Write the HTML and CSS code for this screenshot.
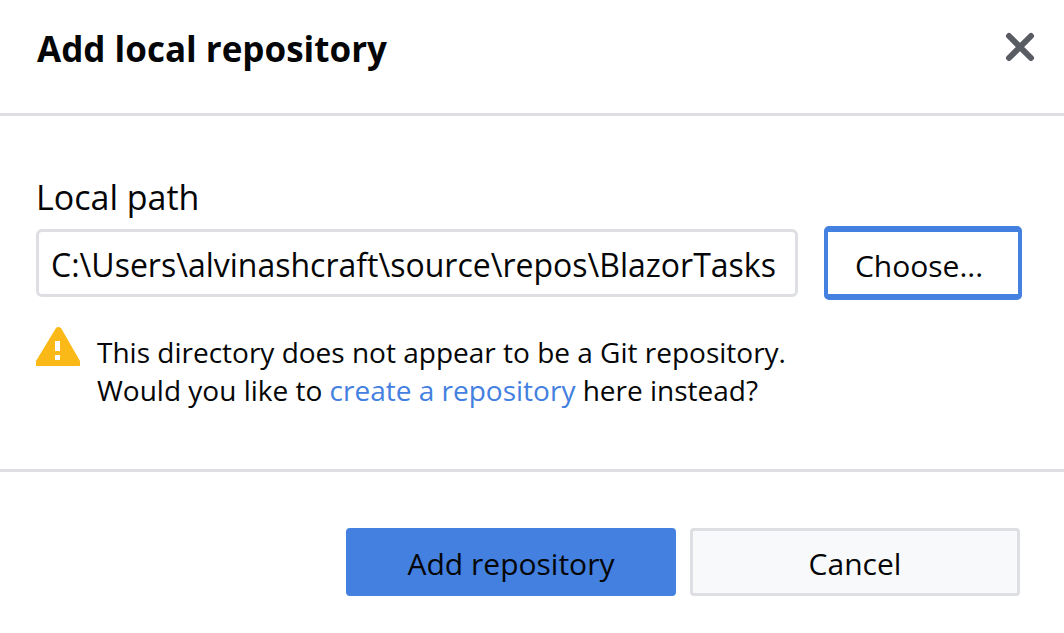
FILE: index.html
```html
<!DOCTYPE html>
<html lang="en">
<head>
<meta charset="utf-8">
<meta name="viewport" content="width=device-width, initial-scale=1">
<title>Add local repository</title>
<link rel="stylesheet" href="styles.css">
</head>
<body>
<main class="dialog" role="dialog" aria-labelledby="title">
  <header class="dialog-header">
    <h1 id="title">Add local repository</h1>
    <button class="close" type="button" aria-label="Close">
      <svg viewBox="0 0 30 30" width="30" height="30" aria-hidden="true"><path d="M4 4L26 26M26 4L4 26" fill="none" stroke="#595c63" stroke-width="6" stroke-linecap="round"/></svg>
    </button>
  </header>
  <form class="dialog-form">
    <section class="dialog-content">
      <label class="field-label" for="path">Local path</label>
      <div class="path-row">
        <input class="path-input" id="path" type="text" value="C:\Users\alvinashcraft\source\repos\BlazorTasks">
        <button class="choose" type="button">Choose...</button>
      </div>
      <div class="warning">
        <svg class="warning-icon" viewBox="0 0 45 40" width="45" height="40" aria-hidden="true"><path d="M20 1Q22 -1 25 1L44 34V39H0V34Z" fill="#fbb917"/><path d="M19 14H24V24H19ZM19 28H24V33H19Z" fill="#fff"/></svg>
        <p>This directory does not appear to be a Git repository.<br>Would you like to <a href="#">create a repository</a> here instead?</p>
      </div>
    </section>
    <footer class="dialog-footer">
      <button class="action primary" type="submit">Add repository</button>
      <button class="action" type="button">Cancel</button>
    </footer>
  </form>
</main>
</body>
</html>
```
FILE: styles.css
```css
* { box-sizing: border-box; }
body {
  margin: 0;
  background: #fff;
  color: #050607;
  font-family: "Open Sans", "Noto Sans", sans-serif;
}
button, input { font: inherit; color: inherit; }
.dialog-header {
  display: flex;
  align-items: flex-start;
  justify-content: space-between;
  padding: 23px 29px 39px 37px;
  border-bottom: 3px solid #dddfe3;
}
h1 { margin: 0; font-size: 35px; line-height: 51px; }
.close { display: flex; margin-top: 9px; padding: 0; border: 0; background: none; }
.dialog-content { padding: 59px 42px 60px 36px; border-bottom: 3px solid #dddfe3; }
.field-label { display: block; font-size: 34px; line-height: 44px; }
.path-row { display: flex; align-items: center; gap: 26px; margin-top: 7px; }
.path-input {
  flex: 1;
  min-width: 0;
  height: 68px;
  padding: 2px 12px 0;
  border: 3px solid #dddfe3;
  border-radius: 6px;
  background: #fff;
  font-size: 32px;
}
.choose {
  width: 198px;
  height: 74px;
  padding: 4px 8px 0 0;
  border: solid #4380df;
  border-width: 6px 4px;
  border-radius: 5px;
  background: #fff;
  font-size: 30px;
}
.warning { display: flex; align-items: flex-start; gap: 16px; margin-top: 27px; }
.warning-icon { flex: none; }
.warning p { margin: 6px 0 0; font-size: 28px; line-height: 38px; }
.warning a { color: #4380df; text-decoration: none; }
.dialog-footer { display: flex; justify-content: flex-end; gap: 14px; padding: 56px 44px 36px; }
.action {
  width: 330px;
  height: 68px;
  padding: 2px 0 0;
  border: 3px solid #dddfe3;
  border-radius: 4px;
  background: #f8f9fb;
  font-size: 30px;
}
.primary { border-color: #4380df; background: #4380df; }
```
